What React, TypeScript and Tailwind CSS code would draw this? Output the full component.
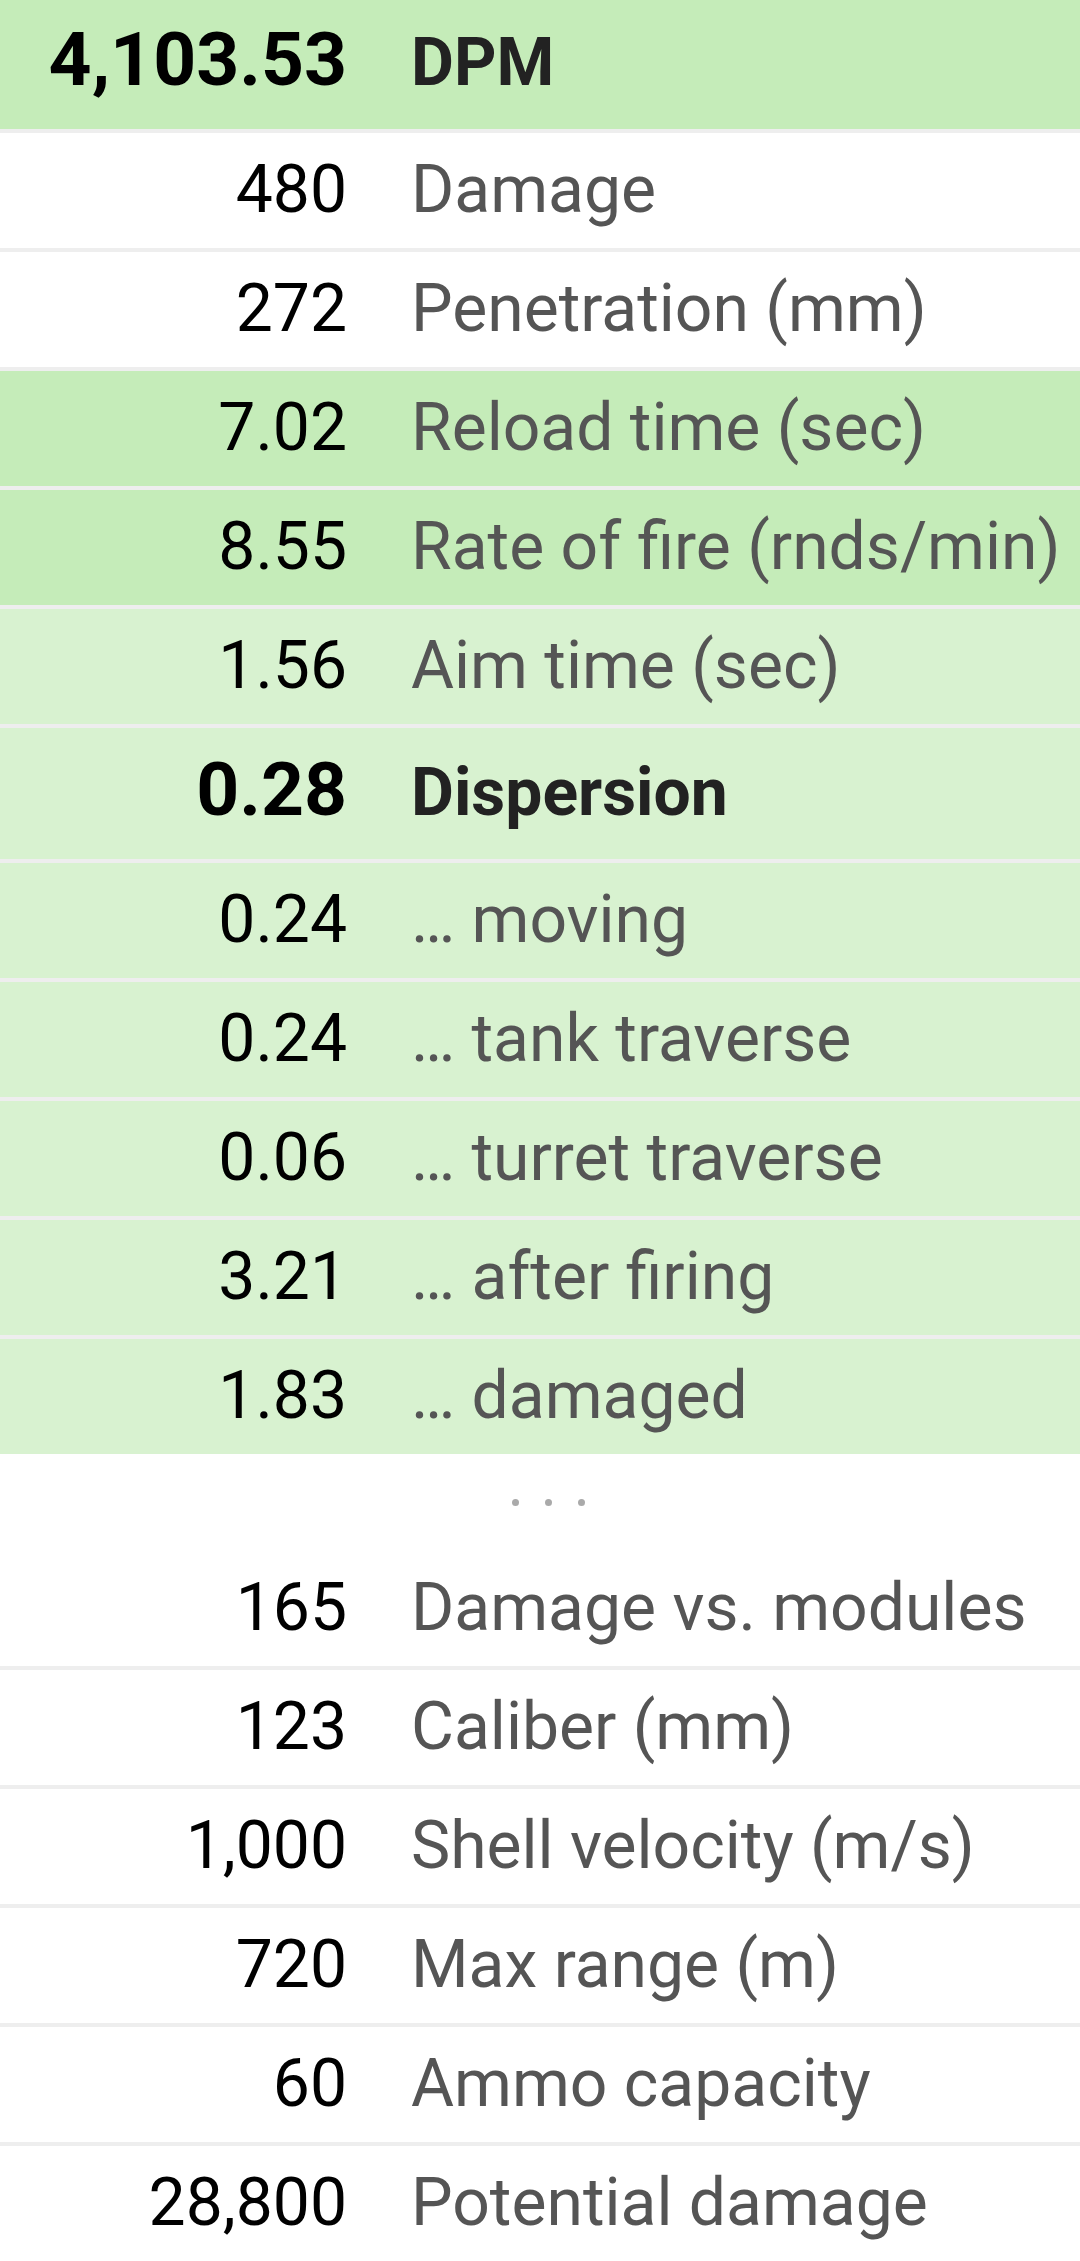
import React from "react";

type Tone = "strong" | "light" | "none";

interface StatRow {
  value: string;
  label: string;
  tone: Tone;
  bold?: boolean;
}

const topRows: StatRow[] = [
  { value: "4,103.53", label: "DPM", tone: "strong", bold: true },
  { value: "480", label: "Damage", tone: "none" },
  { value: "272", label: "Penetration (mm)", tone: "none" },
  { value: "7.02", label: "Reload time (sec)", tone: "strong" },
  { value: "8.55", label: "Rate of fire (rnds/min)", tone: "strong" },
  { value: "1.56", label: "Aim time (sec)", tone: "light" },
  { value: "0.28", label: "Dispersion", tone: "light", bold: true },
  { value: "0.24", label: "… moving", tone: "light" },
  { value: "0.24", label: "… tank traverse", tone: "light" },
  { value: "0.06", label: "… turret traverse", tone: "light" },
  { value: "3.21", label: "… after firing", tone: "light" },
  { value: "1.83", label: "… damaged", tone: "light" },
];

const bottomRows: StatRow[] = [
  { value: "165", label: "Damage vs. modules", tone: "none" },
  { value: "123", label: "Caliber (mm)", tone: "none" },
  { value: "1,000", label: "Shell velocity (m/s)", tone: "none" },
  { value: "720", label: "Max range (m)", tone: "none" },
  { value: "60", label: "Ammo capacity", tone: "none" },
  { value: "28,800", label: "Potential damage", tone: "none" },
];

const toneBg: Record<Tone, string> = {
  strong: "bg-[#c5ecb9]",
  light: "bg-[#d8f2d0]",
  none: "bg-white",
};

function Row({ row, first, last }: { row: StatRow; first?: boolean; last?: boolean }) {
  // heights include the 4px divider; bold rows are taller and sit a few px higher
  let height = "h-[119px] pb-[2px]";
  if (row.bold) height = first ? "h-[133px] pb-[10px]" : "h-[135px] pb-[8px]";
  if (last) height = "h-[115px] pb-[2px]";

  return (
    <div
      className={`flex items-center ${height} ${toneBg[row.tone]} ${
        last ? "" : "border-b-4 border-[#eeeeee]"
      }`}
    >
      <div className="flex items-baseline whitespace-nowrap">
        <span
          className={`w-[347px] text-right text-black ${
            row.bold ? "text-[75px] font-bold" : "text-[66px]"
          }`}
        >
          {row.value}
        </span>
        <span
          className={`ml-[64px] text-[66px] ${
            row.bold ? "font-bold text-[#222222]" : "text-[#555555]"
          }`}
        >
          {row.label}
        </span>
      </div>
    </div>
  );
}

export default function App() {
  return (
    <div
      className="w-[1080px] h-[2261px] overflow-hidden bg-white"
      style={{ fontFamily: "Roboto, 'Noto Sans', sans-serif" }}
    >
      {topRows.map((row, i) => (
        <Row key={i} row={row} first={i === 0} last={i === topRows.length - 1} />
      ))}

      {/* collapsed rows */}
      <div className="flex h-[97px] items-center justify-center gap-[26px] pl-[16px]">
        <span className="h-[7px] w-[7px] rounded-full bg-[#aaaaaa]" />
        <span className="h-[7px] w-[7px] rounded-full bg-[#aaaaaa]" />
        <span className="h-[7px] w-[7px] rounded-full bg-[#aaaaaa]" />
      </div>

      {bottomRows.map((row, i) => (
        <Row key={i} row={row} last={i === bottomRows.length - 1} />
      ))}
    </div>
  );
}
